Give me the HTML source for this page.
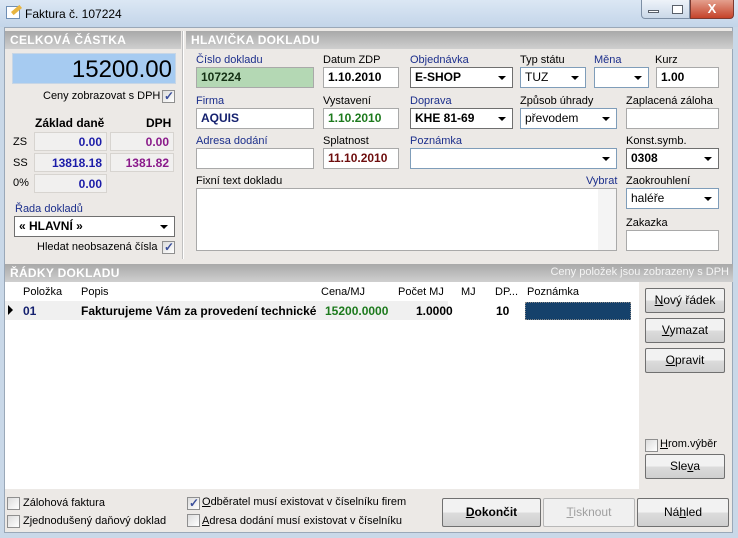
<!DOCTYPE html>
<html><head><meta charset="utf-8"><style>
*{box-sizing:border-box;margin:0;padding:0}
body{width:738px;height:538px;overflow:hidden;font-family:"Liberation Sans",sans-serif;font-size:11px;color:#000;background:#c9d8e8;position:relative}
.a{position:absolute}
.tb{left:0;top:0;width:738px;height:27px;background:linear-gradient(#dbe7f4,#c3d5e9)}
.content{left:4px;top:27px;width:729px;height:506px;background:#ece9e6;border:1px solid #9aa8b8}
.hdr{height:18px;background:linear-gradient(#a9a9a9,#cfcfcf);color:#fff;font-weight:bold;font-size:12px;padding:2px 5px;letter-spacing:.3px}
.lbl{white-space:nowrap}
.blue{color:#1c2f8c}
.in{background:#fff;border:1px solid #a9a9a9;height:21px;padding:2px 4px;font-weight:bold;font-size:12px;white-space:nowrap;overflow:hidden}
.cb{background:#fff;border:1px solid #7f9db9;height:21px;padding:2px 4px;font-weight:bold;font-size:12px}
.arr{position:absolute;right:6px;top:8px;width:0;height:0;border-left:4px solid transparent;border-right:4px solid transparent;border-top:4px solid #000}
.gbox{background:#f1f0ef;border:1px solid #d7d4d0;height:19px;text-align:right;padding:2px 4px;font-weight:bold;font-size:12px}
.chk{width:13px;height:13px;border:1px solid #8f8f8f;background:linear-gradient(135deg,#dcdcdc,#fff)}
.chk.on::after{content:"✓";position:absolute;left:1px;top:-2px;font-size:12px;color:#3b4f9b;font-weight:bold}
.btn{border:1px solid #707070;border-radius:2px;background:linear-gradient(#f2f2f2 50%,#dcdcdc 50%,#cfcfcf);text-align:center;font-size:12px}
u{text-decoration:underline}
</style></head><body>
<div class="a tb"></div>
<div class="a" style="left:6px;top:6px;width:14px;height:13px;border:1px solid #6f8fb5;background:#fff"></div>
<div class="a" style="left:11px;top:8px;width:11px;height:4px;background:#e8b540;transform:rotate(-40deg)"></div>
<div class="a lbl" style="left:25px;top:7px;font-size:12px">Faktura č. 107224</div>
<div class="a" style="left:641px;top:0;width:49px;height:19px;border:1px solid #7d8fa5;border-top:none;border-radius:0 0 0 4px;background:linear-gradient(#eef3f9,#cad8e8)"></div>
<div class="a" style="left:648px;top:10px;width:11px;height:3px;border:1px solid #59606a;background:#fff"></div>
<div class="a" style="left:672px;top:5px;width:11px;height:9px;border:1px solid #59606a;background:#fff"></div>
<div class="a" style="left:690px;top:0;width:44px;height:19px;border:1px solid #7d3a30;border-top:none;border-radius:0 0 4px 0;background:linear-gradient(#e4a08e,#c5432a);color:#fff;font-weight:bold;text-align:center;font-size:13px;line-height:17px">X</div>

<div class="a content"></div>
<!-- left panel -->
<div class="a hdr" style="left:5px;top:31px;width:176px">CELKOVÁ ČÁSTKA</div>
<div class="a" style="left:12px;top:53px;width:164px;height:31px;background:#a6cbf1;border:1px solid #c7d6e6;text-align:right;font-size:24px;padding:2px 3px 0 0">15200.00</div>
<div class="a lbl" style="left:43px;top:90px">Ceny zobrazovat s DPH</div>
<div class="a chk on" style="left:162px;top:90px"></div>
<div class="a lbl" style="left:35px;top:116px;font-weight:bold;font-size:12px">Základ daně</div>
<div class="a lbl" style="left:146px;top:116px;font-weight:bold;font-size:12px">DPH</div>
<div class="a" style="left:13px;top:136px">ZS</div>
<div class="a" style="left:13px;top:157px">SS</div>
<div class="a" style="left:13px;top:177px">0%</div>
<div class="a gbox" style="left:34px;top:132px;width:73px;color:#1c1ca8">0.00</div>
<div class="a gbox" style="left:110px;top:132px;width:64px;color:#8a1a8a">0.00</div>
<div class="a gbox" style="left:34px;top:153px;width:73px;color:#1c1ca8">13818.18</div>
<div class="a gbox" style="left:110px;top:153px;width:64px;color:#8a1a8a">1381.82</div>
<div class="a gbox" style="left:34px;top:174px;width:73px;color:#1c1ca8">0.00</div>
<div class="a lbl blue" style="left:15px;top:203px">Řada dokladů</div>
<div class="a cb" style="left:14px;top:216px;width:161px;border-color:#6f6f6f">« HLAVNÍ »<span class="arr"></span></div>
<div class="a lbl" style="left:37px;top:241px">Hledat neobsazená čísla</div>
<div class="a chk on" style="left:162px;top:241px"></div>
<div class="a" style="left:182px;top:31px;width:2px;height:228px;background:#fff;border-left:1px solid #c0c0c0"></div>

<!-- right panel -->
<div class="a hdr" style="left:186px;top:31px;width:547px">HLAVIČKA DOKLADU</div>
<div class="a lbl blue" style="left:196px;top:54px">Číslo dokladu</div>
<div class="a lbl" style="left:323px;top:54px">Datum ZDP</div>
<div class="a lbl blue" style="left:410px;top:54px">Objednávka</div>
<div class="a lbl" style="left:520px;top:54px">Typ státu</div>
<div class="a lbl blue" style="left:594px;top:54px">Měna</div>
<div class="a lbl" style="left:655px;top:54px">Kurz</div>
<div class="a in" style="left:196px;top:67px;width:118px;background:#b4d8b4;color:#143014">107224</div>
<div class="a in" style="left:323px;top:67px;width:76px">1.10.2010</div>
<div class="a cb" style="left:410px;top:67px;width:103px;border-color:#6f6f6f">E-SHOP<span class="arr"></span></div>
<div class="a cb" style="left:520px;top:67px;width:66px;font-weight:normal;font-size:12px">TUZ<span class="arr"></span></div>
<div class="a cb" style="left:594px;top:67px;width:55px"><span class="arr"></span></div>
<div class="a in" style="left:656px;top:67px;width:63px">1.00</div>

<div class="a lbl blue" style="left:196px;top:95px">Firma</div>
<div class="a lbl" style="left:323px;top:95px">Vystavení</div>
<div class="a lbl blue" style="left:410px;top:95px">Doprava</div>
<div class="a lbl" style="left:520px;top:95px">Způsob úhrady</div>
<div class="a lbl" style="left:626px;top:95px">Zaplacená záloha</div>
<div class="a in" style="left:196px;top:108px;width:118px;color:#14206e">AQUIS</div>
<div class="a in" style="left:323px;top:108px;width:76px;color:#1d7a1d">1.10.2010</div>
<div class="a cb" style="left:410px;top:108px;width:103px;border-color:#6f6f6f">KHE 81-69<span class="arr"></span></div>
<div class="a cb" style="left:520px;top:108px;width:97px;font-weight:normal">převodem<span class="arr"></span></div>
<div class="a in" style="left:626px;top:108px;width:93px"></div>

<div class="a lbl blue" style="left:196px;top:135px">Adresa dodání</div>
<div class="a lbl" style="left:323px;top:135px">Splatnost</div>
<div class="a lbl blue" style="left:410px;top:135px">Poznámka</div>
<div class="a lbl" style="left:626px;top:135px">Konst.symb.</div>
<div class="a in" style="left:196px;top:148px;width:118px"></div>
<div class="a in" style="left:323px;top:148px;width:76px;color:#6e0d0d">11.10.2010</div>
<div class="a cb" style="left:410px;top:148px;width:207px"><span class="arr"></span></div>
<div class="a cb" style="left:626px;top:148px;width:93px;border-color:#6f6f6f">0308<span class="arr"></span></div>

<div class="a lbl" style="left:196px;top:175px">Fixní text dokladu</div>
<div class="a lbl blue" style="left:586px;top:175px">Vybrat</div>
<div class="a lbl" style="left:626px;top:175px">Zaokrouhlení</div>
<div class="a" style="left:196px;top:188px;width:421px;height:63px;background:#fff;border:1px solid #a9a9a9"></div>
<div class="a" style="left:598px;top:189px;width:18px;height:61px;background:#f4f4f4"></div>
<div class="a cb" style="left:626px;top:188px;width:93px;font-weight:normal">haléře<span class="arr"></span></div>
<div class="a lbl" style="left:626px;top:217px">Zakazka</div>
<div class="a in" style="left:626px;top:230px;width:93px"></div>

<!-- grid panel -->
<div class="a hdr" style="left:5px;top:264px;width:728px">ŘÁDKY DOKLADU<span style="position:absolute;right:4px;top:2px;font-weight:normal;font-size:11px;color:#f4f4f4;letter-spacing:0">Ceny položek jsou zobrazeny s DPH</span></div>
<div class="a" style="left:5px;top:282px;width:634px;height:207px;background:#fff"></div>
<div class="a" style="left:5px;top:283px;width:444px;height:17px;background:#fff"></div>
<div class="a lbl" style="left:23px;top:286px">Položka</div>
<div class="a lbl" style="left:81px;top:286px">Popis</div>
<div class="a lbl" style="left:321px;top:286px">Cena/MJ</div>
<div class="a lbl" style="left:398px;top:286px">Počet MJ</div>
<div class="a lbl" style="left:461px;top:286px">MJ</div>
<div class="a lbl" style="left:495px;top:286px">DP...</div>
<div class="a lbl" style="left:527px;top:286px">Poznámka</div>
<div class="a" style="left:5px;top:301px;width:443px;height:19px;background:#f0f0f0"></div>
<div class="a" style="left:8px;top:305px;width:0;height:0;border-top:5px solid transparent;border-bottom:5px solid transparent;border-left:5px solid #000"></div>
<div class="a lbl" style="left:23px;top:304px;font-weight:bold;font-size:12px;color:#14206e">01</div>
<div class="a lbl" style="left:81px;top:304px;font-weight:bold;font-size:12px">Fakturujeme Vám za provedení technické</div>
<div class="a lbl" style="left:325px;top:304px;font-weight:bold;font-size:12px;color:#1d7a1d">15200.0000</div>
<div class="a lbl" style="left:416px;top:304px;font-weight:bold;font-size:12px">1.0000</div>
<div class="a lbl" style="left:496px;top:304px;font-weight:bold;font-size:12px">10</div>
<div class="a" style="left:525px;top:302px;width:106px;height:18px;background:#15416b;border:1px dotted #888"></div>

<div class="a btn" style="left:645px;top:288px;width:80px;height:25px;line-height:23px"><u>N</u>ový řádek</div>
<div class="a btn" style="left:645px;top:318px;width:80px;height:25px;line-height:23px"><u>V</u>ymazat</div>
<div class="a btn" style="left:645px;top:348px;width:80px;height:25px;line-height:23px"><u>O</u>pravit</div>
<div class="a chk" style="left:645px;top:439px"></div>
<div class="a lbl" style="left:660px;top:438px"><u>H</u>rom.výběr</div>
<div class="a btn" style="left:645px;top:454px;width:80px;height:25px;line-height:23px">Sle<u>v</u>a</div>

<div class="a chk" style="left:7px;top:497px"></div>
<div class="a lbl" style="left:23px;top:497px">Zálohová faktura</div>
<div class="a chk" style="left:7px;top:515px"></div>
<div class="a lbl" style="left:23px;top:515px">Zjednodušený daňový doklad</div>
<div class="a chk on" style="left:187px;top:497px"></div>
<div class="a lbl" style="left:202px;top:496px"><u>O</u>dběratel musí existovat v číselníku firem</div>
<div class="a chk" style="left:187px;top:514px"></div>
<div class="a lbl" style="left:202px;top:515px"><u>A</u>dresa dodání musí existovat v číselníku</div>
<div class="a btn" style="left:442px;top:498px;width:99px;height:29px;line-height:27px;font-weight:bold"><u>D</u>okončit</div>
<div class="a btn" style="left:543px;top:498px;width:92px;height:29px;line-height:27px;color:#a0a0a0;border-color:#b8b8b8;background:#f0f0f0"><u>T</u>isknout</div>
<div class="a btn" style="left:637px;top:498px;width:92px;height:29px;line-height:27px">Ná<u>h</u>led</div>
</body></html>
